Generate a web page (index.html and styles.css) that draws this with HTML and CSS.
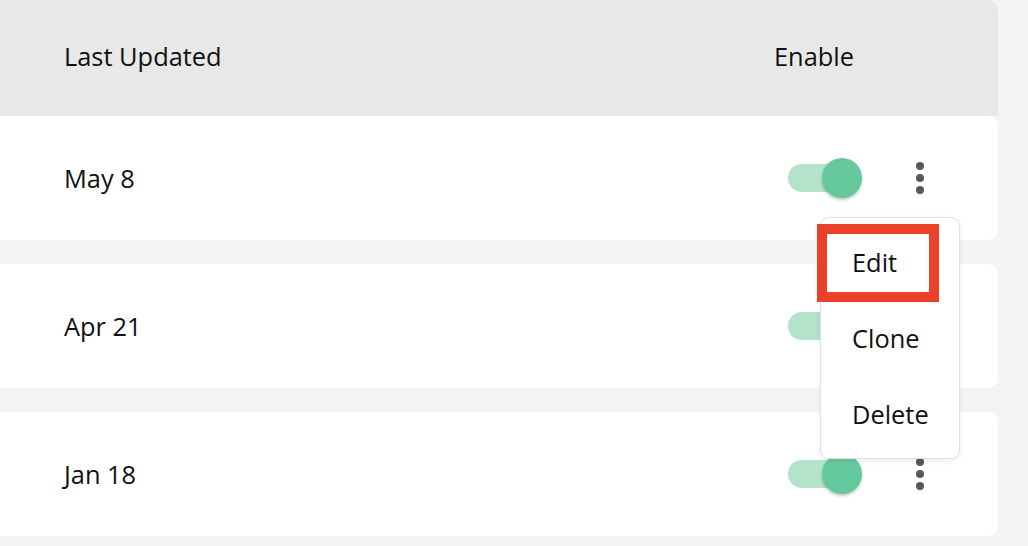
FILE: index.html
```html
<!DOCTYPE html>
<html>
<head>
<meta charset="utf-8">
<link rel="stylesheet" href="styles.css">
</head>
<body>
<div class="table">
  <div class="head">
    <div class="cell date">Last Updated</div>
    <div class="cell enable">Enable</div>
    <div class="cell"></div>
  </div>
  <div class="row">
    <div class="cell date">May 8</div>
    <div class="cell toggle-cell"><span class="toggle"><span class="knob"></span></span></div>
    <div class="cell kebab-cell"><span class="kebab"><i></i><i></i><i></i></span></div>
  </div>
  <div class="row">
    <div class="cell date">Apr 21</div>
    <div class="cell toggle-cell"><span class="toggle"><span class="knob"></span></span></div>
    <div class="cell kebab-cell"><span class="kebab"><i></i><i></i><i></i></span></div>
  </div>
  <div class="row">
    <div class="cell date">Jan 18</div>
    <div class="cell toggle-cell"><span class="toggle"><span class="knob"></span></span></div>
    <div class="cell kebab-cell"><span class="kebab"><i></i><i></i><i></i></span></div>
  </div>
  <ul class="menu">
    <li class="menu-item">Edit<span class="highlight"></span></li>
    <li class="menu-item">Clone</li>
    <li class="menu-item">Delete</li>
  </ul>
</div>
</body>
</html>
```
FILE: styles.css
```css
* { box-sizing: border-box; }
html, body { margin: 0; padding: 0; }
body {
  background: #f4f4f4;
  font-family: "Open Sans", "Noto Sans", sans-serif;
  font-size: 25.4px;
  color: #111;
  width: 1028px;
  height: 546px;
  overflow: hidden;
}
.table {
  position: relative;
  width: 998px;
  display: flex;
  flex-direction: column;
  gap: 24px;
}
.head, .row {
  display: grid;
  grid-template-columns: 774px 110px 114px;
  align-items: center;
}
.head {
  height: 116px;
  padding-bottom: 5px;
  background: #e8e8e8;
  border-radius: 0 10px 0 0;
  margin-bottom: -24px;
}
.row {
  height: 124px;
  background: #fff;
  border-radius: 0 10px 10px 0;
}
.date { padding-left: 64px; }
.toggle-cell { padding-left: 14px; display: flex; }
.toggle {
  position: relative;
  display: block;
  width: 68px;
  height: 28px;
  border-radius: 14px;
  background: #b3e3cb;
}
.knob {
  position: absolute;
  left: 34px;
  top: -6px;
  width: 40px;
  height: 40px;
  border-radius: 50%;
  background: #66c89d;
  box-shadow: 0 2px 3px rgba(0,0,0,0.22);
}
.kebab-cell { padding-left: 16px; display: flex; }
.kebab {
  width: 40px;
  height: 40px;
  display: flex;
  flex-direction: column;
  align-items: center;
  justify-content: center;
  gap: 4px;
}
.kebab i {
  display: block;
  width: 8px;
  height: 8px;
  border-radius: 50%;
  background: #585858;
}
.menu {
  position: absolute;
  left: 820px;
  top: 217px;
  width: 140px;
  margin: 0;
  padding: 6px 0 6px;
  list-style: none;
  background: #fff;
  border: 1px solid #e2e2e2;
  border-radius: 9px;
  box-shadow: 0 2px 6px rgba(0,0,0,0.08);
}
.menu-item {
  position: relative;
  height: 76px;
  display: flex;
  align-items: center;
  padding-left: 31px;
}
.highlight {
  position: absolute;
  left: -4px;
  top: 0;
  width: 122px;
  height: 78px;
  border: 10px solid #ea4128;
}
```
